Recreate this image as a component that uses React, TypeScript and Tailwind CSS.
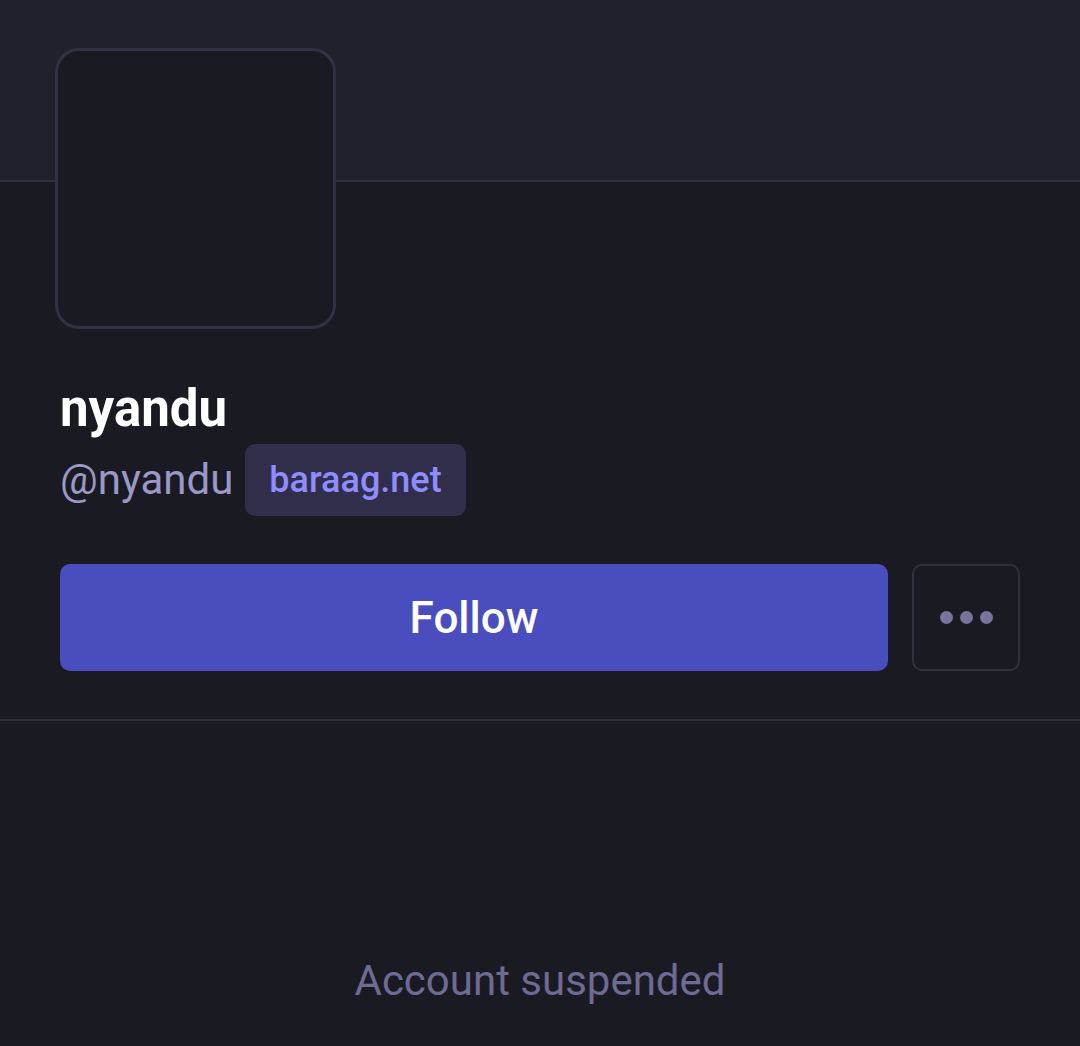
export default function App() {
  return (
    <div
      className="min-h-[1046px] w-[1080px] bg-[#1a1a22] overflow-hidden"
      style={{ fontFamily: "Roboto, 'Noto Sans', sans-serif" }}
    >
      {/* Header banner */}
      <div className="h-[182px] bg-[#21212c] border-b-2 border-[#2f2f3e]" />

      {/* Profile */}
      <div className="px-[60px]">
        <div className="-mt-[134px] -ml-[5px] w-[281px] h-[281px] rounded-[24px] border-[3px] border-[#313143] bg-[#1a1a22]" />

        <div className="mt-[50px] text-[51px] leading-[60px] font-bold text-white">
          nyandu
        </div>
        <div className="mt-[5px] flex items-center gap-[12px]">
          <span className="text-[42px] leading-none text-[#9b98c7]">@nyandu</span>
          <span className="h-[72px] px-[24px] flex items-center rounded-[10px] bg-[#302e4a] text-[36px] font-medium text-[#8f8cff]">
            baraag.net
          </span>
        </div>

        <div className="mt-[48px] flex gap-[24px]">
          <button className="flex-1 h-[107px] rounded-[10px] bg-[#4a4dbd] text-white text-[44px] font-medium">
            Follow
          </button>
          <button className="w-[108px] h-[107px] rounded-[10px] border-2 border-[#30303f] flex items-center justify-center gap-[7px]">
            <span className="w-[13px] h-[13px] rounded-full bg-[#77749e]" />
            <span className="w-[13px] h-[13px] rounded-full bg-[#77749e]" />
            <span className="w-[13px] h-[13px] rounded-full bg-[#77749e]" />
          </button>
        </div>
      </div>

      <div className="mt-[48px] border-b-2 border-[#2e2e3d]" />

      <div className="pt-[228px] text-center text-[42px] text-[#6d6a94]">
        Account suspended
      </div>
    </div>
  );
}
